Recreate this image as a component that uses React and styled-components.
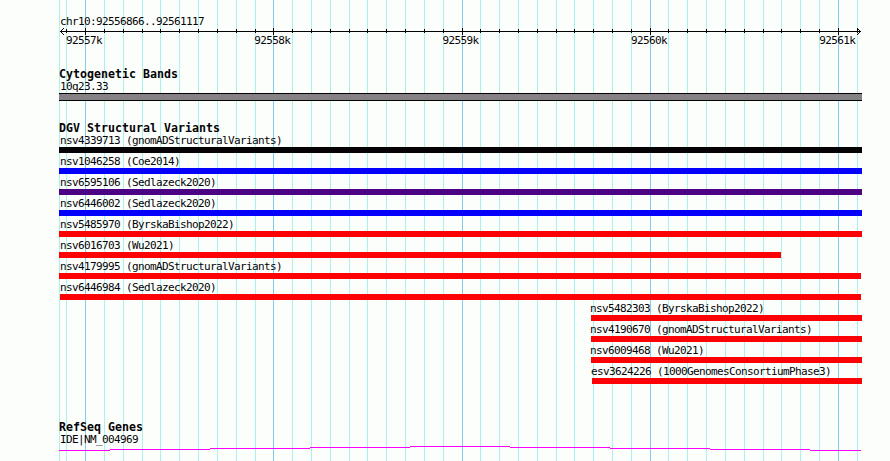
import React from 'react'
import styled, { createGlobalStyle } from 'styled-components'

const colors = {
  page: '#fcfefc',
  ink: '#040204',
  gridMinor: '#acf2ec',
  gridMajor: '#84cae9',
  band: '#848284',
  blue: '#0402fc',
  indigo: '#4c0284',
  red: '#fc0204',
  magenta: '#fc02fc',
}

const gridMajor = [85, 273, 462, 650, 838]
const gridMinor = [
  59, 66, 104, 123, 142, 160, 179, 198, 217, 236, 255, 292, 311, 330, 349,
  367, 386, 405, 424, 443, 480, 499, 518, 537, 556, 574, 593, 612, 631, 668,
  687, 706, 725, 744, 763, 781, 800, 819, 857,
]

const variants = [
  { name: 'nsv4339713 (gnomADStructuralVariants)', start: 59, end: 862, color: colors.ink },
  { name: 'nsv1046258 (Coe2014)', start: 59, end: 862, color: colors.blue },
  { name: 'nsv6595106 (Sedlazeck2020)', start: 59, end: 862, color: colors.indigo },
  { name: 'nsv6446002 (Sedlazeck2020)', start: 59, end: 862, color: colors.blue },
  { name: 'nsv5485970 (ByrskaBishop2022)', start: 59, end: 862, color: colors.red },
  { name: 'nsv6016703 (Wu2021)', start: 59, end: 781, color: colors.red },
  { name: 'nsv4179995 (gnomADStructuralVariants)', start: 59, end: 861, color: colors.red },
  { name: 'nsv6446984 (Sedlazeck2020)', start: 60, end: 861, color: colors.red },
  { name: 'nsv5482303 (ByrskaBishop2022)', start: 591, end: 862, color: colors.red },
  { name: 'nsv4190670 (gnomADStructuralVariants)', start: 591, end: 862, color: colors.red },
  { name: 'nsv6009468 (Wu2021)', start: 591, end: 862, color: colors.red },
  { name: 'esv3624226 (1000GenomesConsortiumPhase3)', start: 592, end: 862, color: colors.red },
]

// the intron line climbs one pixel per step, then comes back down
const geneSteps = [
  [59, 110, 4], [110, 210, 3], [210, 310, 2], [310, 410, 1], [410, 510, 0],
  [510, 610, 1], [610, 710, 2], [710, 810, 3], [810, 861, 4],
]

const GlobalStyle = createGlobalStyle`
  body {
    margin: 0;
    background: ${colors.page};
  }
`

const Browser = styled.main`
  position: relative;
  box-sizing: border-box;
  width: 890px;
  height: 461px;
  padding-top: 14px;
  overflow: hidden;
  background: ${colors.page};
  color: ${colors.ink};
  font-family: 'DejaVu Sans Mono', 'Liberation Mono', monospace;
  font-size: 11px;
  line-height: 13px;
  white-space: pre;
`

const GridLayer = styled.svg`
  position: absolute;
  top: 0;
  left: 0;
`

const Track = styled.section`
  position: relative;
  height: ${({ $height }) => $height}px;
`

const Title = styled.h2`
  margin: 0 0 0 59px;
  height: 12px;
  font-size: 11.6px;
  font-weight: bold;
  letter-spacing: 0.016px;
`

const Label = styled.div`
  height: 13px;
  margin-left: ${({ $start }) => $start}px;
  letter-spacing: -0.622px;
`

const Region = styled(Label)`
  line-height: 15px;
`

const RulerLine = styled.svg`
  display: block;
`

const RulerLabels = styled.div`
  display: flex;
  gap: 152.3px;
  margin-left: 66px;
  line-height: 11px;
  letter-spacing: -0.622px;
`

const RulerLabel = styled.span`
  flex: none;
  width: 36px;
`

const Band = styled.div`
  box-sizing: border-box;
  width: 803px;
  height: 8px;
  margin-left: 59px;
  border: solid ${colors.ink};
  border-width: 1px 0;
  background: ${colors.band};
`

const Variant = styled.div`
  height: 21px;
`

const Bar = styled.div`
  width: ${({ $start, $end }) => $end - $start}px;
  height: 6px;
  margin-left: ${({ $start }) => $start}px;
  background: ${({ $color }) => $color};
`

const GeneLine = styled.svg`
  display: block;
`

const Grid = () => (
  <GridLayer width="890" height="461" shapeRendering="crispEdges">
    {gridMinor.map((x) => (
      <rect key={x} x={x} width="1" height="461" fill={colors.gridMinor} />
    ))}
    {gridMajor.map((x) => (
      <rect key={x} x={x} width="1" height="461" fill={colors.gridMajor} />
    ))}
  </GridLayer>
)

const Ruler = () => (
  <RulerLine width="890" height="8" shapeRendering="crispEdges" fill={colors.ink}>
    <rect x="60" y="4" width="801" height="1" />
    {gridMinor.slice(1).map((x) => (
      <rect key={x} x={x} y="2" width="1" height="4" />
    ))}
    {gridMajor.map((x) => (
      <rect key={x} x={x} y="1" width="1" height="7" />
    ))}
    {[1, 2, 3].map((d) => (
      <React.Fragment key={d}>
        <rect x={60 + d} y={4 - d} width="1" height="1" />
        <rect x={60 + d} y={4 + d} width="1" height="1" />
        <rect x={860 - d} y={4 - d} width="1" height="1" />
        <rect x={860 - d} y={4 + d} width="1" height="1" />
      </React.Fragment>
    ))}
  </RulerLine>
)

const App = () => (
  <>
    <GlobalStyle />
    <Browser>
      <Grid />
      <Track $height={54}>
        <Region $start={60}>chr10:92556866..92561117</Region>
        <Ruler />
        <RulerLabels>
          {['92557k', '92558k', '92559k', '92560k', '92561k'].map((tick) => (
            <RulerLabel key={tick}>{tick}</RulerLabel>
          ))}
        </RulerLabels>
      </Track>
      <Track $height={54}>
        <Title>Cytogenetic Bands</Title>
        <Label $start={60}>10q23.33</Label>
        <Band />
      </Track>
      <Track $height={299}>
        <Title>DGV Structural Variants</Title>
        {variants.map(({ name, start, end, color }) => (
          <Variant key={name}>
            <Label $start={start < 100 ? 60 : start - 1}>{name}</Label>
            <Bar $start={start} $end={end} $color={color} />
          </Variant>
        ))}
      </Track>
      <Track $height={40}>
        <Title>RefSeq Genes</Title>
        <Label $start={60}>IDE|NM_004969</Label>
        <GeneLine width="890" height="5" shapeRendering="crispEdges" fill={colors.magenta}>
          {geneSteps.map(([from, to, y]) => (
            <rect key={from} x={from} y={y} width={to - from} height="1" />
          ))}
        </GeneLine>
      </Track>
    </Browser>
  </>
)

export default App
